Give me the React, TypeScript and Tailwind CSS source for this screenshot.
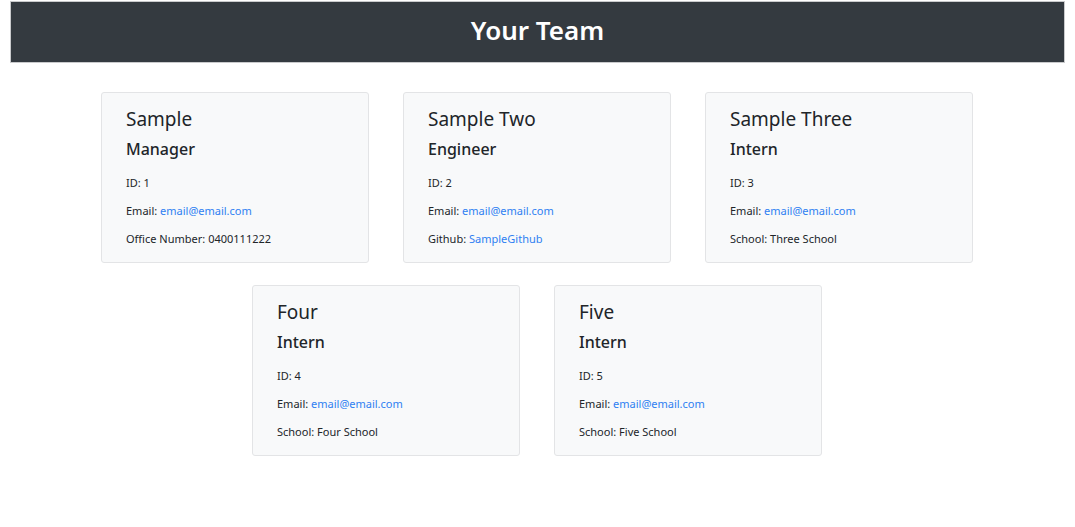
import React from "react";

type Member = {
  name: string;
  role: string;
  id: number;
  extraLabel: string;
  extraValue: string;
  extraLink?: boolean;
};

const team: Member[] = [
  { name: "Sample", role: "Manager", id: 1, extraLabel: "Office Number", extraValue: "0400111222" },
  { name: "Sample Two", role: "Engineer", id: 2, extraLabel: "Github", extraValue: "SampleGithub", extraLink: true },
  { name: "Sample Three", role: "Intern", id: 3, extraLabel: "School", extraValue: "Three School" },
  { name: "Four", role: "Intern", id: 4, extraLabel: "School", extraValue: "Four School" },
  { name: "Five", role: "Intern", id: 5, extraLabel: "School", extraValue: "Five School" },
];

const Card: React.FC<{ m: Member }> = ({ m }) => (
  <div className="w-[268px] h-[171px] bg-[#f8f9fa] border border-[#e3e4e6] rounded-[3px] pl-[24px] pt-[14px]">
    <h3 className="text-[19px] leading-[24px] text-[#212529] font-normal">{m.name}</h3>
    <h4 className="text-[16px] leading-[20px] mt-[8px] text-[#212529] font-medium">{m.role}</h4>
    <div className="mt-[17px] text-[11px] leading-[14px] text-[#212529] flex flex-col gap-[14px]">
      <p>ID: {m.id}</p>
      <p>
        Email: <a className="text-[#2f80f2]">email@email.com</a>
      </p>
      <p>
        {m.extraLabel}:{" "}
        {m.extraLink ? <a className="text-[#2f80f2]">{m.extraValue}</a> : m.extraValue}
      </p>
    </div>
  </div>
);

export default function App() {
  return (
    <div className="min-h-[527px] bg-white pt-[1px]" style={{ fontFamily: '"Noto Sans", "Open Sans", sans-serif' }}>
      <header className="ml-[10px] w-[1055px] h-[62px] bg-[#343a40] border border-[#c9cacc] flex items-center justify-center pb-[3px]">
        <h1 className="text-white text-[26px] font-semibold">Your Team</h1>
      </header>
      <main className="w-[872px] ml-[101px] mt-[29px] flex flex-wrap justify-center gap-x-[34px] gap-y-[22px]">
        {team.map((m) => (
          <Card key={m.id} m={m} />
        ))}
      </main>
    </div>
  );
}
